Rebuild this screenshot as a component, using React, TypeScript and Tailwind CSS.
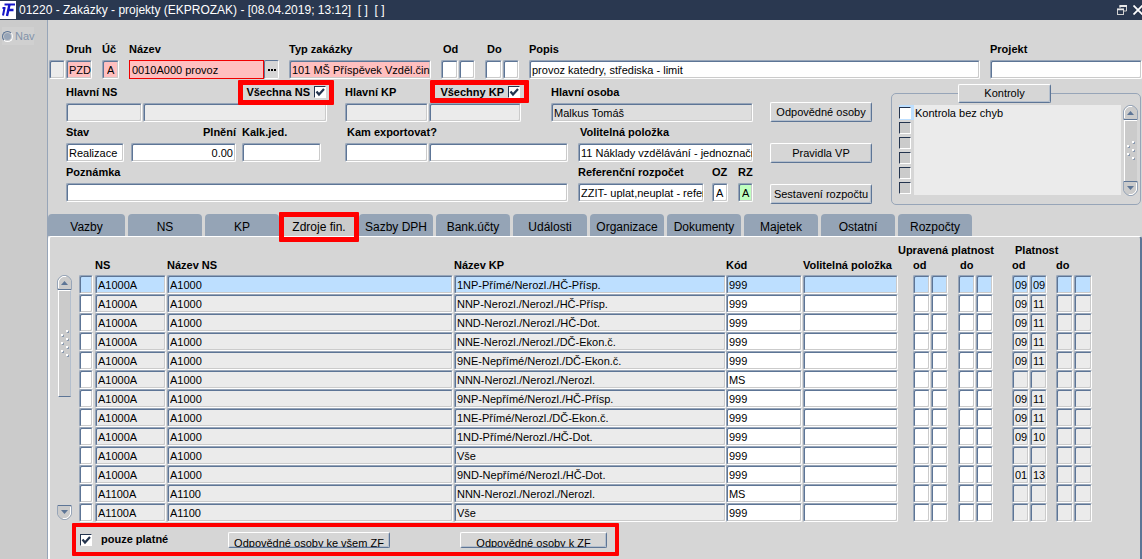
import React, { useId } from "react";

const BEVEL =
  "border border-t-[#97a5b8] border-l-[#97a5b8] border-r-white border-b-white shadow-[inset_1px_1px_0_#5d7596,inset_-1px_-1px_0_#cbcbcb] rounded-[2px]";

type BoxProps = {
  value?: string;
  className?: string;
  id?: string;
  label?: string;
};

function Box({ value = "", className = "bg-white", id, label }: BoxProps) {
  return (
    <input
      type="text"
      id={id}
      aria-label={label}
      defaultValue={value}
      className={`block h-[19px] min-w-0 py-0 pl-[2px] pr-0 text-[11px] leading-[14px] text-black outline-none ${BEVEL} ${className}`}
    />
  );
}

type FieldProps = {
  label: string;
  value?: string;
  className?: string;
  box?: string;
  labelClass?: string;
  children?: React.ReactNode;
};

function Field({
  label,
  value,
  className = "",
  box = "bg-white",
  labelClass = "",
  children,
}: FieldProps) {
  const id = useId();
  return (
    <div className={`flex flex-col gap-[3px] ${className}`}>
      <label htmlFor={id} className={`h-4 whitespace-nowrap font-bold leading-4 ${labelClass}`}>
        {label}
      </label>
      <div className="flex gap-px">
        <Box id={id} value={value} className={`${children ? "" : "w-full"} ${box}`} />
        {children}
      </div>
    </div>
  );
}

function Check({
  checked = false,
  id,
  label,
  className = "bg-white",
}: {
  checked?: boolean;
  id?: string;
  label?: string;
  className?: string;
}) {
  return (
    <span className="relative block size-3 shrink-0">
      <input
        type="checkbox"
        id={id}
        aria-label={label}
        defaultChecked={checked}
        className={`peer block size-3 appearance-none border border-b-white border-l-[#24344e] border-r-white border-t-[#24344e] ${className}`}
      />
      <svg
        viewBox="0 0 12 12"
        className="pointer-events-none absolute inset-0 hidden size-3 peer-checked:block"
      >
        <path d="M2.5 5.5 L5 8.5 L10 3" fill="none" stroke="#24344e" strokeWidth="2.2" />
      </svg>
    </span>
  );
}

function Highlight({ className }: { className: string }) {
  return (
    <span
      className={`pointer-events-none absolute rounded-[1px] border-[5px] border-[#ff0000] ${className}`}
    />
  );
}

function PushButton({ children, className = "" }: { children: React.ReactNode; className?: string }) {
  return (
    <button
      type="button"
      className={`overflow-hidden whitespace-nowrap rounded-[2px] border border-b-[#5d7596] border-l-white border-r-[#5d7596] border-t-white bg-[#d6d6d6] text-[11px] shadow-[inset_-1px_-1px_0_#b4bfcd] ${className}`}
    >
      {children}
    </button>
  );
}

function CheckedHeading({
  title,
  checkLabel,
  id,
  frame,
}: {
  title: string;
  checkLabel: string;
  id: string;
  frame: string;
}) {
  return (
    <div className="flex h-4 justify-between font-bold leading-4">
      <label htmlFor={`${id}-field`}>{title}</label>
      <label htmlFor={`${id}-all`} className="relative flex items-center gap-1 pr-px">
        {checkLabel}
        <Check checked id={`${id}-all`} />
        <Highlight className={frame} />
      </label>
    </div>
  );
}

function ScrollButton({ down = false }: { down?: boolean }) {
  return (
    <button type="button" aria-label={down ? "Dolů" : "Nahoru"} className="block h-[15px] w-[15px]">
      <svg viewBox="0 0 15 15" className={`size-[15px] ${down ? "rotate-180" : ""}`}>
        <path
          d="M.5 14.500V5.500L2.500 2.500L5.500 .5H9.500L12.500 2.500L14.500 5.500V14.500Z"
          fill="#cbcbcb"
          stroke="#97a5b8"
        />
        <path d="M1.500 13V6L3.500 3L6 1.500H9" fill="none" stroke="#fff" />
        <path d="M1 14.500H14" stroke="#5d7596" />
        <path d="M4 10L7.500 6L11 10Z" fill="#5d7596" />
      </svg>
    </button>
  );
}

function Bumps({ rows }: { rows: number }) {
  return (
    <svg width="10" height={rows * 8 + 4} viewBox={`0 0 10 ${rows * 8 + 4}`}>
      {Array.from({ length: rows * 2 + 1 }, (_, i) => {
        const x = i % 2 ? 1 : 6;
        const y = i * 4;
        return (
          <g key={i}>
            <rect x={x + 1} y={y + 1} width="2" height="2" fill="#8a9ab0" />
            <rect x={x} y={y} width="2" height="2" fill="#fff" />
          </g>
        );
      })}
    </svg>
  );
}

const TABS = [
  "Vazby",
  "NS",
  "KP",
  "Zdroje fin.",
  "Sazby DPH",
  "Bank.účty",
  "Události",
  "Organizace",
  "Dokumenty",
  "Majetek",
  "Ostatní",
  "Rozpočty",
];

const ROWS: [string, string, string, string, string, string][] = [
  ["A1000A", "A1000", "1NP-Přímé/Nerozl./HČ-Přísp.", "999", "09", "09"],
  ["A1000A", "A1000", "NNP-Nerozl./Nerozl./HČ-Přísp.", "999", "09", "11"],
  ["A1000A", "A1000", "NND-Nerozl./Nerozl./HČ-Dot.", "999", "09", "11"],
  ["A1000A", "A1000", "NNE-Nerozl./Nerozl./DČ-Ekon.č.", "999", "09", "11"],
  ["A1000A", "A1000", "9NE-Nepřímé/Nerozl./DČ-Ekon.č.", "999", "09", "11"],
  ["A1000A", "A1000", "NNN-Nerozl./Nerozl./Nerozl.", "MS", "", ""],
  ["A1000A", "A1000", "9NP-Nepřímé/Nerozl./HČ-Přísp.", "999", "09", "11"],
  ["A1000A", "A1000", "1NE-Přímé/Nerozl./DČ-Ekon.č.", "999", "09", "11"],
  ["A1000A", "A1000", "1ND-Přímé/Nerozl./HČ-Dot.", "999", "09", "10"],
  ["A1000A", "A1000", "Vše", "999", "", ""],
  ["A1000A", "A1000", "9ND-Nepřímé/Nerozl./HČ-Dot.", "999", "01", "13"],
  ["A1100A", "A1100", "NNN-Nerozl./Nerozl./Nerozl.", "MS", "", ""],
  ["A1100A", "A1100", "Vše", "999", "", ""],
];

function TitleBar() {
  return (
    <header className="flex h-5 shrink-0 items-center bg-[#2a3850] text-white">
      <svg viewBox="0 0 16 18" className="h-[18px] w-4">
        <rect width="16" height="18" fill="#fff" />
        <path d="M4.500 7L3 14.500M2.500 7H5.500" stroke="#1414c8" strokeWidth="2" fill="none" />
        <path d="M4.500 3.500H15" stroke="#1414c8" strokeWidth="2" fill="none" />
        <path d="M9.500 3.500L7 15M8.500 9H13.500" stroke="#1414c8" strokeWidth="2.400" fill="none" />
      </svg>
      <h1 className="flex-1 whitespace-pre pl-[3px] text-[12px] leading-4">
        01220 - Zakázky - projekty (EKPROZAK) - [08.04.2019; 13:12]  [ ]  [ ]
      </h1>
      <button type="button" aria-label="Obnovit" className="mr-1.5">
        <svg viewBox="0 0 10 10" className="size-2.5">
          <path d="M3 3V.5H9.500V6H7" fill="none" stroke="#d0d0d0" />
          <path d="M2.500 1H10" stroke="#e8e8e8" strokeWidth="2" />
          <rect x=".5" y="4" width="6" height="5.500" fill="#2a3850" stroke="#d0d0d0" />
          <path d="M0 4.500H7" stroke="#e8e8e8" strokeWidth="1.500" />
        </svg>
      </button>
      <button type="button" aria-label="Zavřít">
        <svg viewBox="0 0 9 10" className="h-2.5 w-[9px]">
          <path d="M.5 .5L9.500 9.500M9.500 .5L.5 9.500" stroke="#fff" strokeWidth="1.800" />
        </svg>
      </button>
    </header>
  );
}

function HeaderForm() {
  return (
    <form className="pt-[21px]">
      <div className="flex items-end pl-px">
        <Box label="Záznam" className="mr-px w-4 bg-[#ebebeb]" />
        <div className="flex min-w-0 flex-1 gap-2.5">
          <Field label="Druh" value="PZD" className="w-[26px]" box="bg-[#ffbfbf]" />
          <Field label="Úč" value="A" className="w-[17px]" box="bg-[#ffbfbf] pl-[4px]" />
          <div className="flex w-[150px] flex-col gap-[3px]">
            <label htmlFor="nazev" className="h-4 font-bold leading-4">
              Název
            </label>
            <div className="flex">
              <input
                id="nazev"
                type="text"
                defaultValue="0010A000 provoz"
                className="block h-[19px] w-[135px] border border-[#f00000] bg-[#ffbfbf] py-0 pl-[2px] pr-0 text-[11px] outline-none"
              />
              <button
                type="button"
                aria-label="Vybrat"
                className="flex h-[19px] w-[15px] items-center justify-center gap-px rounded-[2px] border border-b-white border-l-[#5d7596] border-r-white border-t-[#5d7596] bg-[#d6d6d6]"
              >
                <span className="size-[2px] bg-black" />
                <span className="size-[2px] bg-black" />
                <span className="size-[2px] bg-black" />
              </button>
            </div>
          </div>
          <Field
            label="Typ zakázky"
            value="101 MŠ Příspěvek Vzděl.činnost"
            className="w-[142px]"
            box="bg-[#ffbfbf]"
          />
          <Field label="Od" labelClass="pl-[2px]" box="bg-white w-[17px]">
            <Box label="Od rok" className="w-4 bg-white" />
          </Field>
          <Field label="Do" labelClass="pl-[2px]" box="bg-white w-[17px]">
            <Box label="Do rok" className="w-4 bg-white" />
          </Field>
          <Field
            label="Popis"
            value="provoz katedry, střediska - limit"
            className="min-w-0 flex-1"
          />
          <Field label="Projekt" className="w-[152px]" />
        </div>
      </div>

      <div className="mt-[5px] flex pl-[18px]">
        <div className="flex w-[687px] shrink-0 flex-col gap-[2px]">
          <div className="flex">
            <div className="mr-[18px] flex w-[261px] flex-col gap-[3px]">
              <CheckedHeading
                title="Hlavní NS"
                checkLabel="Všechna NS"
                id="ns"
                frame="-bottom-[5px] -left-2 -right-[7px] -top-1"
              />
              <div className="flex gap-px">
                <Box id="ns-field" className="w-[76px] bg-[#ebebeb]" />
                <Box label="Název hlavního NS" className="flex-1 bg-[#ebebeb]" />
              </div>
            </div>
            <div className="mr-[30px] flex w-[176px] flex-col gap-[3px]">
              <CheckedHeading
                title="Hlavní KP"
                checkLabel="Všechny KP"
                id="kp"
                frame="-bottom-[3px] -left-2.5 -right-2 -top-1"
              />
              <div className="flex gap-px">
                <Box id="kp-field" className="w-[83px] bg-[#ebebeb]" />
                <Box label="Název hlavního KP" className="flex-1 bg-[#ebebeb]" />
              </div>
            </div>
            <Field label="Hlavní osoba" value="Malkus Tomáš" className="flex-1" box="bg-[#dedede]" />
          </div>
          <div className="flex">
            <Field label="Stav" value="Realizace" className="mr-[7px] w-[58px]" />
            <Field
              label="Plnění"
              value="0.00"
              className="mr-[6px] w-[105px]"
              box="bg-white text-right pr-[2px]"
              labelClass="text-right"
            />
            <Field label="Kalk.jed." className="mr-[24px] w-[79px]" />
            <Field
              label="Kam exportovat?"
              labelClass="pl-[2px]"
              className="mr-2.5 w-[223px]"
              box="bg-white w-[83px]"
            >
              <Box label="Kam exportovat, název" className="flex-1 bg-white" />
            </Field>
            <Field
              label="Volitelná položka"
              labelClass="pl-[2px]"
              value="11 Náklady vzdělávání - jednoznačné"
              className="flex-1"
            />
          </div>
          <div className="flex">
            <Field label="Poznámka" className="mr-2.5 w-[502px]" />
            <Field
              label="Referenční rozpočet"
              value="ZZIT- uplat,neuplat - referenční"
              className="mr-2 w-[126px]"
            />
            <Field label="OZ" value="A" className="mr-2.5 w-4" box="bg-white pl-[3px]" />
            <Field label="RZ" value="A" className="w-[15px]" box="bg-[#bfffbf] pl-[3px]" />
          </div>
        </div>

        <div className="ml-[17px] flex w-[102px] shrink-0 flex-col gap-[21px] pt-[18px]">
          <PushButton className="h-5">Odpovědné osoby</PushButton>
          <PushButton className="h-5">Pravidla VP</PushButton>
          <PushButton className="h-5">Sestavení rozpočtu</PushButton>
        </div>

        <section className="relative ml-[19px] flex-1 pt-[9px]">
          <PushButton className="absolute left-[67px] top-0 h-[19px] w-[93px]">Kontroly</PushButton>
          <div className="mr-px flex h-[112px] rounded-[5px] border border-[#97a5b8] pb-2 pl-[7px] pr-[2px] pt-[11px]">
            <ul className="flex-1">
              {["Kontrola bez chyb", "", "", "", "", ""].map((text, i) => (
                <li key={i} className="flex h-[15px] items-stretch">
                  <span
                    className={
                      i === 0
                        ? "flex w-[15px] items-center bg-[#bddfff]"
                        : "flex w-[15px] items-center"
                    }
                  >
                    <Check
                      label={text || `Kontrola ${i + 1}`}
                      className={i === 0 ? "bg-white" : "bg-[#cbcbcb]"}
                    />
                  </span>
                  <span className="flex-1 bg-[#ebebeb] pl-px leading-4">{text}</span>
                </li>
              ))}
            </ul>
            <div className="ml-[2px] flex w-[15px] flex-col">
              <ScrollButton />
              <div className="mx-px flex flex-1 items-center justify-center border-l border-t border-white bg-[#cbcbcb]">
                <Bumps rows={2} />
              </div>
              <ScrollButton down />
            </div>
          </div>
        </section>
      </div>
    </form>
  );
}

function Th({
  children,
  span,
  className = "",
}: {
  children?: React.ReactNode;
  span?: number;
  className?: string;
}) {
  return (
    <th
      colSpan={span}
      className={`h-[15px] whitespace-nowrap p-0 text-left align-middle font-bold leading-[15px] ${className}`}
    >
      {children}
    </th>
  );
}

function Td({
  value,
  tone,
  label,
  pad = "",
}: {
  value?: string;
  tone: string;
  label: string;
  pad?: string;
}) {
  return (
    <td className={`p-0 ${pad}`}>
      <Box value={value} label={label} className={`w-full ${tone}`} />
    </td>
  );
}

function FundingTable() {
  return (
    <table className="min-w-0 flex-1 table-fixed border-collapse">
      <colgroup>
        <col className="w-4" />
        <col className="w-[72px]" />
        <col />
        <col className="w-[272px]" />
        <col className="w-[77px]" />
        <col className="w-[95px]" />
        <col className="w-[15px]" />
        <col className="w-[18px]" />
        <col className="w-[18px]" />
        <col className="w-[9px]" />
        <col className="w-[18px]" />
        <col className="w-[18px]" />
        <col className="w-[18px]" />
        <col className="w-[18px]" />
        <col className="w-[18px]" />
        <col className="w-[8px]" />
        <col className="w-[18px]" />
        <col className="w-[18px]" />
      </colgroup>
      <thead>
        <tr>
          <Th span={6} />
          <Th span={6}>Upravená platnost</Th>
          <Th />
          <Th span={5} className="pl-[3px]">
            Platnost
          </Th>
        </tr>
        <tr>
          <Th />
          <Th>NS</Th>
          <Th>Název NS</Th>
          <Th>Název KP</Th>
          <Th>Kód</Th>
          <Th>Volitelná položka</Th>
          <Th />
          <Th span={2}>od</Th>
          <Th />
          <Th span={2} className="pl-[2px]">
            do
          </Th>
          <Th />
          <Th span={2}>od</Th>
          <Th />
          <Th span={2}>do</Th>
        </tr>
        <tr className="h-[2px]" />
      </thead>
      <tbody>
        {ROWS.map(([ns, nsName, kpName, code, from, to], i) => {
          const edit = i === 0 ? "bg-[#bddfff]" : "bg-white";
          const lock = i === 0 ? "bg-[#bddfff]" : "bg-[#ebebeb]";
          return (
            <tr key={i}>
              <Td tone={edit} label="Výběr řádku" pad="pr-[2px]" />
              <Td value={ns} tone={lock} label="NS" pad="pr-px" />
              <Td value={nsName} tone={lock} label="Název NS" pad="pr-px" />
              <Td value={kpName} tone={lock} label="Název KP" />
              <Td value={code} tone={edit} label="Kód" pad="pr-px" />
              <Td tone={edit} label="Volitelná položka" />
              <td />
              <Td tone={edit} label="Upravená platnost od, měsíc" pad="pr-px" />
              <Td tone={edit} label="Upravená platnost od, rok" pad="pr-px" />
              <td />
              <Td tone={edit} label="Upravená platnost do, měsíc" pad="pr-px" />
              <Td tone={edit} label="Upravená platnost do, rok" pad="pr-px" />
              <td />
              <Td value={from} tone={lock} label="Platnost od, měsíc" pad="pr-px" />
              <Td value={to} tone={lock} label="Platnost od, rok" pad="pr-px" />
              <td />
              <Td tone={lock} label="Platnost do, měsíc" pad="pr-px" />
              <Td tone={lock} label="Platnost do, rok" />
            </tr>
          );
        })}
      </tbody>
    </table>
  );
}

export default function App() {
  return (
    <div className="flex min-h-screen flex-col bg-[#d6d6d6] font-['Liberation_Sans',Arial,sans-serif] text-[11px] text-black">
      <TitleBar />
      <div className="flex flex-1">
        <aside className="w-12 shrink-0 border-r border-[#97a5b8] bg-[#cbcbcb] pl-[2px] pt-[7px]">
          <label className="flex h-[18px] w-8 items-center gap-[2px] bg-[#d0d0d0] text-[#8293aa]">
            <input
              type="radio"
              name="nav"
              className="size-[11px] shrink-0 appearance-none rounded-full border border-b-white border-l-[#5d7596] border-r-white border-t-[#5d7596] bg-[#97a5b8] shadow-[inset_0_0_0_1px_#cbcbcb]"
            />
            Nav
          </label>
        </aside>

        <main className="flex min-w-0 flex-1 flex-col">
          <HeaderForm />

          <div role="tablist" className="mt-[9px] flex gap-[3px]">
            {TABS.map((tab, i) => (
              <button
                key={tab}
                type="button"
                role="tab"
                aria-selected={i === 3}
                className={`relative h-[22px] rounded-t-[4px] pt-[3px] text-[12px] leading-4 ${
                  i === 0 ? "w-[77px]" : "w-[74px]"
                } ${i === 3 ? "bg-[#cbcbcb]" : "bg-[#95a4b6]"}`}
              >
                {tab}
                {i === 3 && <Highlight className="-bottom-[6px] -left-[3px] -right-[3px] -top-[2px]" />}
              </button>
            ))}
          </div>

          <section className="flex flex-1 flex-col rounded-t-[3px] border-l-2 border-r-2 border-t border-l-white border-r-[#5d7596] border-t-white pt-[6px]">
            <div className="flex pl-[7px] pr-12">
              <div className="mr-[7px] flex w-[15px] flex-col pb-[2px] pt-8">
                <ScrollButton />
                <div className="mx-px flex h-[107px] items-center justify-center border border-b-[#5d7596] border-l-white border-r-[#b4bfcd] border-t-white bg-[#cbcbcb]">
                  <Bumps rows={3} />
                </div>
                <div className="flex-1" />
                <ScrollButton down />
              </div>
              <FundingTable />
            </div>
            <div className="mb-[3px] ml-[22px] mt-px flex h-[33px] w-[547px] items-center rounded-[1px] border-[4px] border-[#ff0000] pl-1">
              <Check checked id="valid-only" />
              <label htmlFor="valid-only" className="ml-[9px] w-[127px] font-bold">
                pouze platné
              </label>
              <PushButton className="flex h-4 w-[162px] items-start justify-center leading-[20px]">
                Odpovědné osoby ke všem ZF
              </PushButton>
              <PushButton className="ml-[70px] flex h-4 w-[147px] items-start justify-center leading-[20px]">
                Odpovědné osoby k ZF
              </PushButton>
            </div>
          </section>
        </main>
      </div>
    </div>
  );
}
